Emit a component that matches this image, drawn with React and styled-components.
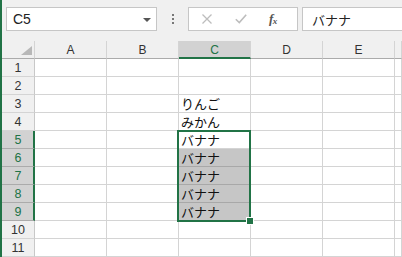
import React from "react";
import styled, { createGlobalStyle, css } from "styled-components";

const GREEN = "#217346";

const Global = createGlobalStyle`
  html, body { margin: 0; padding: 0; background: #ffffff; }
  body { font-family: "Liberation Sans", "Noto Sans CJK JP", sans-serif; }
  #root { width: 402px; height: 257px; overflow: hidden; }
`;

const Frame = styled.div`
  display: flex;
  width: 402px;
  height: 257px;
  overflow: hidden;
  background: #ffffff;
`;

const Edge = styled.div`
  flex: 0 0 2px;
  background: ${GREEN};
`;

const Main = styled.div`
  flex: 1;
  display: flex;
  flex-direction: column;
  min-width: 0;
`;

const Toolbar = styled.div`
  height: 41px;
  box-sizing: border-box;
  padding: 7px 0 0 4px;
  display: flex;
  align-items: flex-start;
  background: #f0f0f0;
`;

const NameBox = styled.div`
  width: 151px;
  height: 24px;
  box-sizing: border-box;
  border: 1px solid #c6c6c6;
  background: #fff;
  display: flex;
  align-items: center;
  justify-content: space-between;
  padding: 0 5px 0 6px;
  font-family: "Liberation Sans", sans-serif;
  font-size: 14px;
  color: #222;
`;

const Caret = styled.span`
  width: 0;
  height: 0;
  border-left: 4px solid transparent;
  border-right: 4px solid transparent;
  border-top: 4px solid #555;
  margin-top: 1px;
`;

const Dots = styled.div`
  width: 31px;
  height: 24px;
  display: flex;
  flex-direction: column;
  align-items: center;
  justify-content: center;
  gap: 2px;
  span {
    width: 2px;
    height: 2px;
    background: #777;
  }
`;

const FxBox = styled.div`
  width: 110px;
  height: 24px;
  box-sizing: border-box;
  border: 1px solid #c6c6c6;
  background: #fff;
  display: flex;
  align-items: center;
  padding-left: 12px;
  gap: 22px;
`;

const Fx = styled.span`
  font-family: "Liberation Serif", serif;
  font-style: italic;
  font-weight: bold;
  font-size: 13px;
  color: #555;
  letter-spacing: -0.5px;
  sub {
    font-size: 9px;
    vertical-align: -1px;
  }
`;

const Formula = styled.div`
  flex: 1;
  margin-left: 4px;
  height: 24px;
  box-sizing: border-box;
  border: 1px solid #c6c6c6;
  border-right: none;
  background: #fff;
  display: flex;
  align-items: center;
  padding-left: 9px;
  font-family: "Noto Sans CJK JP", sans-serif;
  font-size: 13px;
  color: #222;
`;

const GridWrap = styled.div`
  position: relative;
  flex: 1;
`;

const Grid = styled.div`
  display: grid;
  grid-template-columns: 33px repeat(5, 72px) 1fr;
  grid-auto-rows: 18px;
`;

const headBase = css`
  background: #f0f0f0;
  font-family: "Liberation Sans", sans-serif;
  color: #333;
  display: flex;
  align-items: center;
  justify-content: center;
`;

const Cell = styled.div`
  box-sizing: border-box;
  border-right: 1px solid #d4d4d4;
  border-bottom: 1px solid #d4d4d4;
  overflow: hidden;
  white-space: nowrap;

  ${(p) =>
    p.$kind === "corner" &&
    css`
      ${headBase};
      position: relative;
      border-bottom-color: #ababab;
      border-right-color: #d4d4d4;
      &::after {
        content: "";
        position: absolute;
        right: 2px;
        bottom: 3px;
        width: 0;
        height: 0;
        border-left: 11px solid transparent;
        border-bottom: 9px solid #b8b8b8;
      }
    `}

  ${(p) =>
    p.$kind === "colHead" &&
    css`
      ${headBase};
      font-size: 12px;
      border-bottom-color: #ababab;
      padding-top: 1px;
      ${p.$hl &&
      css`
        background: #d2d2d2;
        color: ${GREEN};
        border-bottom: 2px solid ${GREEN};
        padding-top: 2px;
      `}
    `}

  ${(p) =>
    p.$kind === "rowHead" &&
    css`
      ${headBase};
      font-size: 12.5px;
      border-right-color: #c8c8c8;
      padding-top: 1px;
      ${p.$hl &&
      css`
        background: #d2d2d2;
        color: ${GREEN};
        border-right: 2px solid ${GREEN};
        border-bottom-color: #ababab;
        padding-left: 1px;
      `}
    `}

  ${(p) =>
    p.$kind === "cell" &&
    css`
      font-family: "Noto Sans CJK JP", sans-serif;
      font-size: 13px;
      line-height: 17px;
      color: #111;
      padding-left: 2px;
      ${p.$sel &&
      css`
        background: #c6c6c6;
        border-bottom-color: #a8a8a8;
        border-right-color: #a8a8a8;
      `}
    `}
`;

const Selection = styled.div`
  position: absolute;
  box-sizing: border-box;
  border: 2px solid ${GREEN};
  pointer-events: none;
`;

const Handle = styled.div`
  position: absolute;
  right: -5px;
  bottom: -5px;
  width: 6px;
  height: 6px;
  background: ${GREEN};
  border: 1px solid #fff;
`;

const cols = ["A", "B", "C", "D", "E", ""];
const values = { 3: "りんご", 4: "みかん", 5: "バナナ", 6: "バナナ", 7: "バナナ", 8: "バナナ", 9: "バナナ" };

function CancelIcon() {
  return (
    <svg width="12" height="10" viewBox="0 0 12 10">
      <path d="M1.5 0.5 L10.5 9.5 M10.5 0.5 L1.5 9.5" stroke="#bdbdbd" strokeWidth="1.3" fill="none" />
    </svg>
  );
}

function CheckIcon() {
  return (
    <svg width="12" height="10" viewBox="0 0 12 10">
      <path d="M0.8 5.2 L4.3 8.6 L11.2 0.8" stroke="#bdbdbd" strokeWidth="1.6" fill="none" />
    </svg>
  );
}

export default function App() {
  const rows = Array.from({ length: 11 }, (_, i) => i + 1);
  return (
    <>
      <Global />
      <Frame>
        <Edge />
        <Main>
          <Toolbar>
            <NameBox>
              <span>C5</span>
              <Caret />
            </NameBox>
            <Dots>
              <span />
              <span />
              <span />
            </Dots>
            <FxBox>
              <CancelIcon />
              <CheckIcon />
              <Fx>
                f<sub>x</sub>
              </Fx>
            </FxBox>
            <Formula>バナナ</Formula>
          </Toolbar>
          <GridWrap>
            <Grid>
              <Cell $kind="corner" />
              {cols.map((c, i) => (
                <Cell key={"h" + i} $kind="colHead" $hl={c === "C"}>
                  {c}
                </Cell>
              ))}
              {rows.map((r) => (
                <React.Fragment key={r}>
                  <Cell $kind="rowHead" $hl={r >= 5 && r <= 9}>
                    {r}
                  </Cell>
                  {cols.map((c, i) => (
                    <Cell key={c + i} $kind="cell" $sel={c === "C" && r >= 6 && r <= 9}>
                      {c === "C" ? values[r] || "" : ""}
                    </Cell>
                  ))}
                </React.Fragment>
              ))}
            </Grid>
            <Selection style={{ left: 175, top: 89, width: 74, height: 92 }}>
              <Handle />
            </Selection>
          </GridWrap>
        </Main>
      </Frame>
    </>
  );
}
